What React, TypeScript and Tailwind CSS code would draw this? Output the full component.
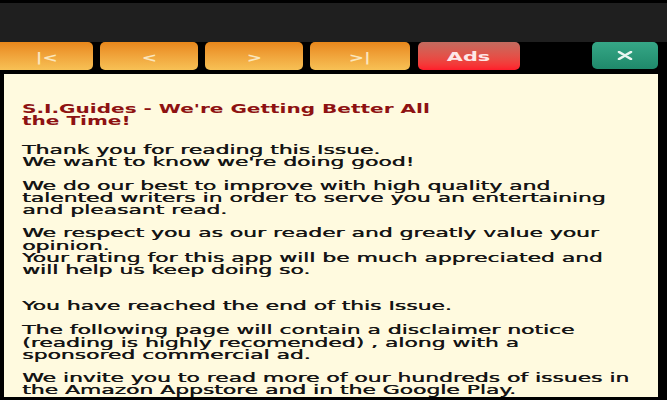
import React from 'react';

const navButtons = [
  { label: '|<', width: 'w-[93px]' },
  { label: '<', width: 'w-[98px]' },
  { label: '>', width: 'w-[98px]' },
  { label: '>|', width: 'w-[100px]' },
];

const App = () => {
  return (
    <div className="w-[667px] h-[400px] bg-black flex flex-col overflow-hidden font-['DejaVu_Sans',sans-serif]">
      {/* status / title bar */}
      <div className="h-[42px] border-t-[3px] border-black bg-[#1f1f1f]" />

      {/* toolbar */}
      <div className="h-[32px] flex items-start">
        <div className="flex gap-[7px]">
          {navButtons.map((b, i) => (
            <button
              key={i}
              className={`${b.width} h-[28px] ${i === 0 ? 'rounded-r-[5px]' : 'rounded-[5px]'} bg-linear-to-b from-[#e8871a] to-[#f7c155] flex items-center justify-center pt-[4px]`}
            >
              <span className="inline-block scale-x-[1.4] text-[13px] font-bold text-[#fbe6bd]">{b.label}</span>
            </button>
          ))}
        </div>
        <button className="ml-[8px] w-[102px] h-[28px] rounded-[5px] bg-linear-to-b from-[#c46a5e] to-[#ff1b2b] flex items-center justify-center pt-[1px]">
          <span className="inline-block scale-x-[1.6] text-[13px] font-bold text-[#fde7e7]">Ads</span>
        </button>
        <div className="flex-1" />
        <button className="w-[66px] h-[27px] rounded-[5px] bg-linear-to-b from-[#36a787] to-[#1f8a6b] flex items-center justify-center mr-[9px]">
          <svg width="16" height="9" viewBox="0 0 16 9">
            <path d="M2 1 L14 8 M14 1 L2 8" stroke="#e9f6f1" strokeWidth="2.6" strokeLinecap="round" />
          </svg>
        </button>
      </div>

      {/* reading panel */}
      <div className="ml-[4px] w-[654px] h-[323px] bg-[#fffadf] pt-[29px] pl-[18px] overflow-hidden">
        <div className="whitespace-nowrap text-[12px] leading-[12.2px] text-[#151515] [text-shadow:0.35px_0_0_currentColor]">
          <p className="origin-left scale-x-[1.67] font-bold text-[#8e1212] [text-shadow:none]">
            S.I.Guides - We're Getting Better All
            <br />
            the Time!
          </p>
          <p className="origin-left scale-x-[1.82] mt-[16.5px]">
            Thank you for reading this Issue.
            <br />
            We want to know we're doing good!
          </p>
          <p className="origin-left scale-x-[1.82] mt-[11.5px]">
            We do our best to improve with high quality and
            <br />
            talented writers in order to serve you an entertaining
            <br />
            and pleasant read.
          </p>
          <p className="origin-left scale-x-[1.82] mt-[11px]">
            We respect you as our reader and greatly value your
            <br />
            opinion.
            <br />
            Your rating for this app will be much appreciated and
            <br />
            will help us keep doing so.
          </p>
          <p className="origin-left scale-x-[1.82] mt-[24px]">You have reached the end of this Issue.</p>
          <p className="origin-left scale-x-[1.82] mt-[12px]">
            The following page will contain a disclaimer notice
            <br />
            (reading is highly recomended) , along with a
            <br />
            sponsored commercial ad.
          </p>
          <p className="origin-left scale-x-[1.82] mt-[10.5px]">
            We invite you to read more of our hundreds of issues in
            <br />
            the Amazon Appstore and in the Google Play.
          </p>
        </div>
      </div>
    </div>
  );
};

export default App;
